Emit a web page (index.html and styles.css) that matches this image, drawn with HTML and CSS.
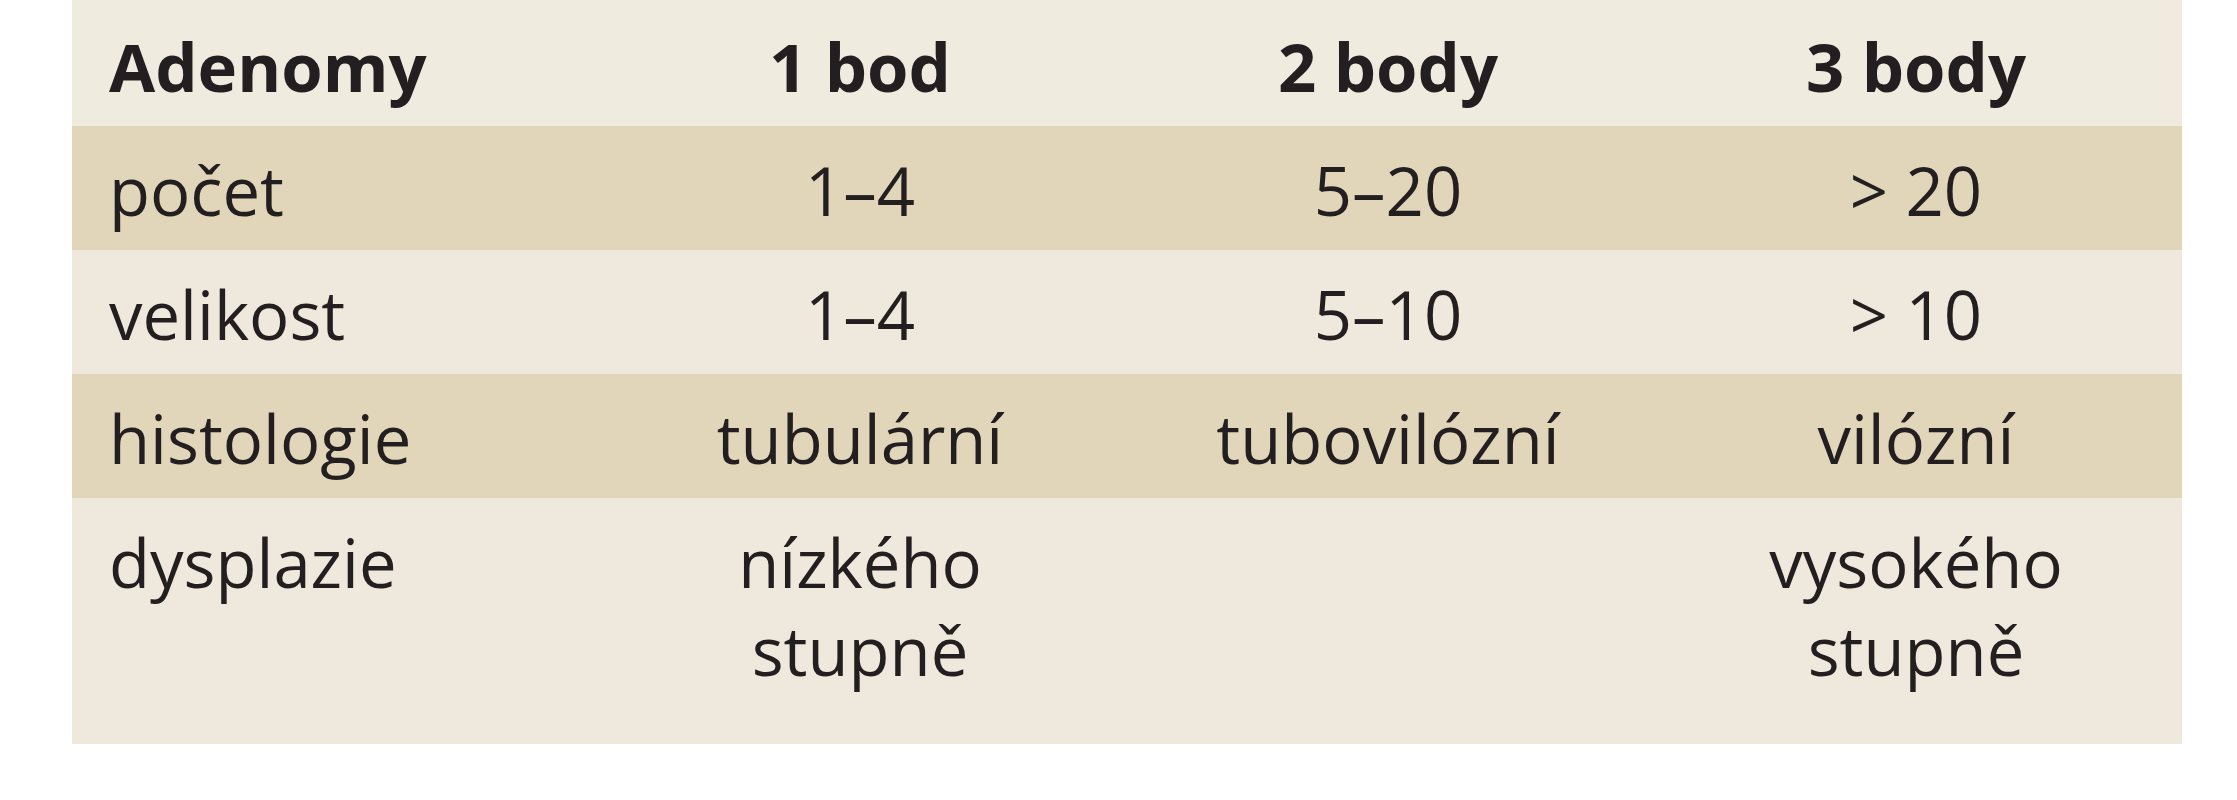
FILE: index.html
```html
<!DOCTYPE html>
<html lang="cs">
<head>
<meta charset="utf-8">
<title>Adenomy</title>
<link rel="stylesheet" href="styles.css">
</head>
<body>
<div class="table">
  <div class="row head">
    <div class="cell first">Adenomy</div>
    <div class="cell">1 bod</div>
    <div class="cell">2 body</div>
    <div class="cell">3 body</div>
  </div>
  <div class="row dark">
    <div class="cell first">počet</div>
    <div class="cell">1–4</div>
    <div class="cell">5–20</div>
    <div class="cell">&gt; 20</div>
  </div>
  <div class="row light">
    <div class="cell first">velikost</div>
    <div class="cell">1–4</div>
    <div class="cell">5–10</div>
    <div class="cell">&gt; 10</div>
  </div>
  <div class="row dark">
    <div class="cell first">histologie</div>
    <div class="cell">tubulární</div>
    <div class="cell">tubovilózní</div>
    <div class="cell">vilózní</div>
  </div>
  <div class="row light last">
    <div class="cell first">dysplazie</div>
    <div class="cell">nízkého<br>stupně</div>
    <div class="cell"></div>
    <div class="cell">vysokého<br>stupně</div>
  </div>
</div>
</body>
</html>
```
FILE: styles.css
```css
html, body {
  margin: 0;
  padding: 0;
  background: #ffffff;
}

body {
  font-family: "Open Sans", "Noto Sans", sans-serif;
  color: #231f20;
}

.table {
  margin-left: 72px;
  width: 2110px;
  display: flex;
  flex-direction: column;
}

.row {
  display: grid;
  grid-template-columns: 524px repeat(3, 528px);
  font-size: 67px;
  line-height: 88px;
  padding: 20px 0 16px;
}

.head {
  background: #f0ebdf;
  font-weight: 700;
  padding: 22px 0 16px;
}

.dark {
  background: #e1d6b9;
}

.light {
  background: #efe8dc;
}

.last {
  padding-bottom: 50px;
}

.cell {
  text-align: center;
}

.cell.first {
  text-align: left;
  padding-left: 37px;
}
```
